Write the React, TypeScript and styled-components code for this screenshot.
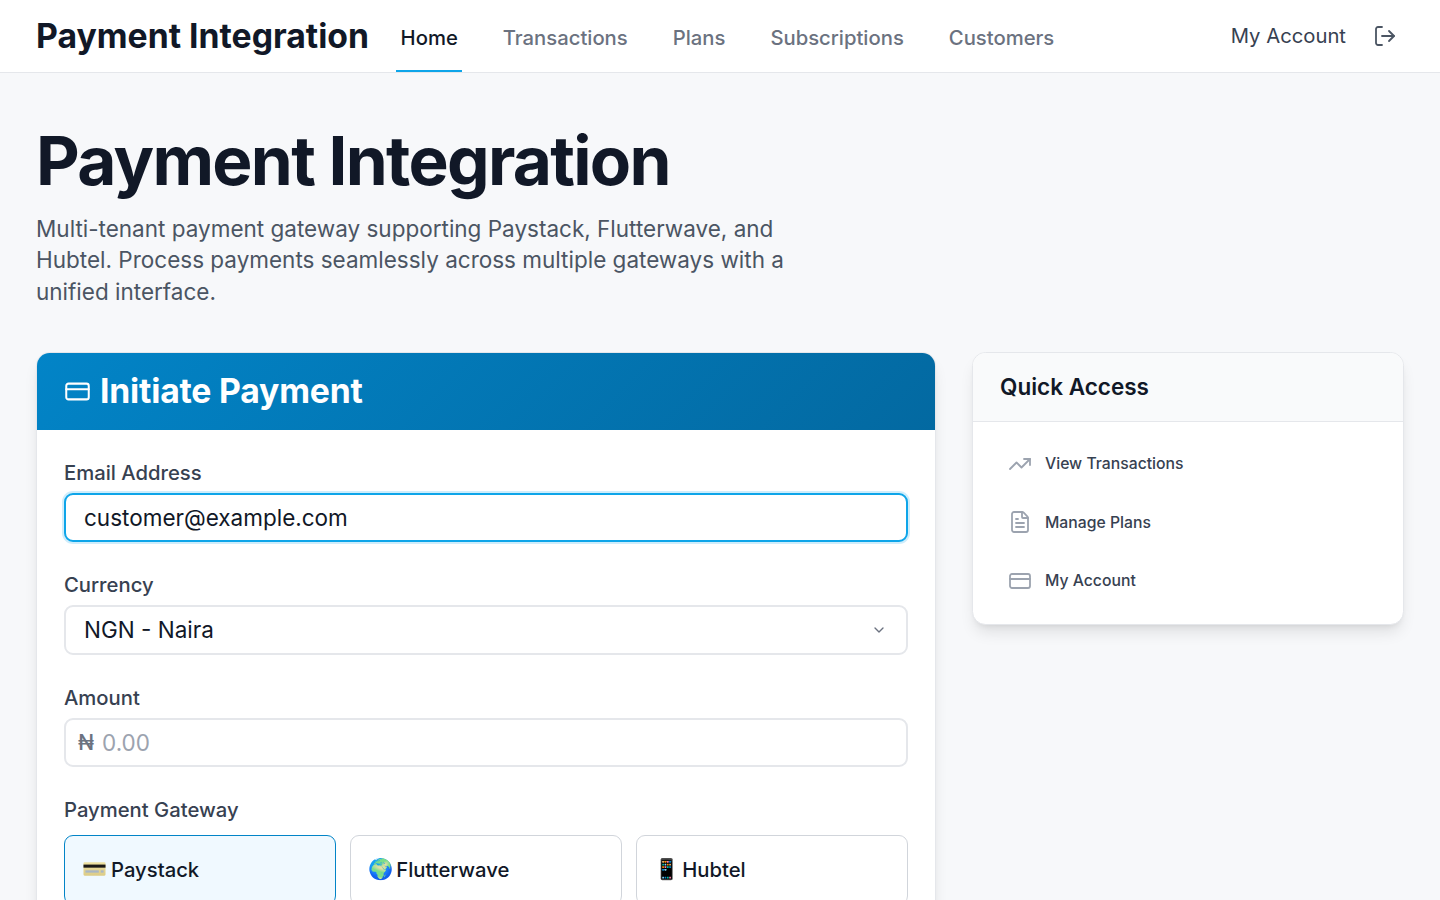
import React from "react";
import styled, { createGlobalStyle } from "styled-components";
import { LogOut, CreditCard, TrendingUp, FileText, ChevronDown } from "lucide-react";

const Global = createGlobalStyle`
  html, body { margin: 0; padding: 0; height: 900px; overflow: hidden; background: #f7f8fa; }
  body { font-family: Inter, "Noto Sans", sans-serif; color: #111827; }
  * { box-sizing: border-box; }
`;
const Header = styled.header`
  height: 73px; background: #fff; border-bottom: 1px solid #e5e7eb;
  display: flex; align-items: stretch; padding: 0 36px;
`;
const Brand = styled.div`
  font-size: 33.75px; font-weight: 700; color: #111827;
  line-height: 72px; margin-right: 27px;
`;
const Nav = styled.nav`display: flex; gap: 36px; flex: 1;`;
const NavLink = styled.a<{ $active?: boolean }>`
  display: flex; align-items: center; padding: 4px 4.5px 0; font-size: 20.25px; font-weight: 500;
  color: ${p => (p.$active ? "#111827" : "#6b7280")};
  border-bottom: 2px solid ${p => (p.$active ? "#0ea5e9" : "transparent")};
`;
const Account = styled.div`
  display: flex; align-items: center; gap: 27px; font-size: 20.25px; color: #374151; padding-right: 7px;
`;
const AccountLabel = styled.span`margin-bottom: 2px;`;
const Main = styled.main`padding: 54px 36px 0;`;
const Title = styled.h1`
  margin: 0; font-size: 67.5px; line-height: 67.5px; font-weight: 700; letter-spacing: -1.7px; color: #111827;
`;
const Lead = styled.p`
  margin: 18px 0 0; width: 800px; font-size: 22.5px; line-height: 31.5px; color: #4b5563;
`;
const Columns = styled.div`
  display: grid; grid-template-columns: 900px 432px; gap: 36px; margin-top: 45px; align-items: start;
`;
const PayCard = styled.section`
  background: #fff; border: 1px solid #e5e7eb; border-radius: 13.5px; overflow: hidden;
  box-shadow: 0 10px 15px -3px rgba(0,0,0,.1), 0 4px 6px -4px rgba(0,0,0,.1); height: 700px;
`;
const PayHead = styled.div`
  height: 77px; display: flex; align-items: center; gap: 9px; padding: 0 27px;
  background: linear-gradient(135deg, #0284c7, #0369a1); color: #fff;
  font-size: 33.75px; font-weight: 700; letter-spacing: -0.2px;
`;
const PayTitle = styled.span`margin-bottom: 2px;`;
const PayBody = styled.div`padding: 26.5px 27px 0; display: flex; flex-direction: column; gap: 27px;`;
const Field = styled.div`display: flex; flex-direction: column; gap: 4.5px;`;
const Label = styled.label`font-size: 20.25px; font-weight: 500; color: #374151; line-height: 32px;`;
const Box = styled.div<{ $focus?: boolean }>`
  height: 49px; border-radius: 9px; display: flex; align-items: center; padding: 0 19px 0 18px;
  background: #fff; font-size: 22.5px; color: #111827;
  border: 2px solid ${p => (p.$focus ? "#0ea5e9" : "#e5e7eb")};
  ${p => p.$focus && "box-shadow: 0 0 0 2px rgba(14,165,233,.2);"}
  justify-content: space-between;
`;
const SelectBox = styled(Box)`height: 50px; margin-top: -1px;`;
const AmountBox = styled(Box)`justify-content: flex-start; padding-left: 12px; gap: 8px; color: #9ca3af;`;
const Naira = styled.span`color: #6b7280; font-weight: 500; font-size: 21px;`;
const Gateways = styled.div`display: grid; grid-template-columns: repeat(3, 1fr); gap: 14px; margin-top: 4.5px;`;
const Gateway = styled.div<{ $active?: boolean }>`
  height: 70px; border-radius: 9px; padding: 0 17px 2px; display: flex; align-items: center;
  font-size: 20.25px; font-weight: 500; color: #111827; gap: 5px;
  border: 1px solid ${p => (p.$active ? "#0284c7" : "#d1d5db")};
  background: ${p => (p.$active ? "#f0f9ff" : "#fff")};
`;
const Emoji = styled.span`font-family: "Noto Color Emoji", sans-serif; font-size: 20.25px; margin-right: -2px;`;
const CardEmoji = styled.svg`width: 23px; height: 16px; flex: none; margin-left: 1px;`;
const Side = styled.aside`
  background: #fff; border: 1px solid #e5e7eb; border-radius: 13.5px; overflow: hidden;
  box-shadow: 0 10px 15px -3px rgba(0,0,0,.1), 0 4px 6px -4px rgba(0,0,0,.1);
`;
const SideHead = styled.div`
  height: 69px; background: #f9fafb; border-bottom: 1px solid #e5e7eb; padding: 0 27px 2px;
  display: flex; align-items: center; font-size: 22.5px; font-weight: 600; color: #111827;
`;
const SideList = styled.div`padding: 12.5px 27px 14px; display: flex; flex-direction: column;`;
const SideItem = styled.a`
  height: 58.5px; display: flex; align-items: center; gap: 13px; padding-left: 8px;
  font-size: 15.75px; font-weight: 500; color: #374151;
  svg { color: #9ca3af; }
`;

export default function App() {
  return (
    <>
      <Global />
      <Header>
        <Brand>Payment Integration</Brand>
        <Nav>
          <NavLink $active>Home</NavLink>
          <NavLink>Transactions</NavLink>
          <NavLink>Plans</NavLink>
          <NavLink>Subscriptions</NavLink>
          <NavLink>Customers</NavLink>
        </Nav>
        <Account><AccountLabel>My Account</AccountLabel><LogOut size={24} strokeWidth={1.8} color="#4b5563" /></Account>
      </Header>
      <Main>
        <Title>Payment Integration</Title>
        <Lead>Multi-tenant payment gateway supporting Paystack, Flutterwave, and Hubtel. Process payments seamlessly across multiple gateways with a unified interface.</Lead>
        <Columns>
          <PayCard>
            <PayHead><CreditCard size={27} strokeWidth={1.8} /><PayTitle>Initiate Payment</PayTitle></PayHead>
            <PayBody>
              <Field><Label>Email Address</Label><Box $focus>customer@example.com</Box></Field>
              <Field><Label>Currency</Label><SelectBox>NGN - Naira<ChevronDown size={16} color="#6b7280" /></SelectBox></Field>
              <Field><Label>Amount</Label><AmountBox><Naira>₦</Naira>0.00</AmountBox></Field>
              <Field>
                <Label>Payment Gateway</Label>
                <Gateways>
                  <Gateway $active>
                    <CardEmoji viewBox="0 0 24 16">
                      <defs>
                        <linearGradient id="cardGold" x1="0" y1="0" x2="0" y2="1">
                          <stop offset="0" stopColor="#efe2a2" />
                          <stop offset="1" stopColor="#dccb86" />
                        </linearGradient>
                      </defs>
                      <rect x="0.5" y="1" width="23" height="14" rx="1.2" fill="url(#cardGold)" />
                      <rect x="0.5" y="3.4" width="23" height="3.2" fill="#1c1a17" />
                      <rect x="2.5" y="9.4" width="14" height="2.4" fill="#a9b6c4" />
                      <rect x="18.5" y="9.4" width="3" height="2.4" fill="#a9b6c4" />
                    </CardEmoji>
                    Paystack
                  </Gateway>
                  <Gateway><Emoji>🌍</Emoji>Flutterwave</Gateway>
                  <Gateway><Emoji>📱</Emoji>Hubtel</Gateway>
                </Gateways>
              </Field>
            </PayBody>
          </PayCard>
          <Side>
            <SideHead>Quick Access</SideHead>
            <SideList>
              <SideItem><TrendingUp size={24} strokeWidth={1.8} />View Transactions</SideItem>
              <SideItem><FileText size={24} strokeWidth={1.8} />Manage Plans</SideItem>
              <SideItem><CreditCard size={24} strokeWidth={1.8} />My Account</SideItem>
            </SideList>
          </Side>
        </Columns>
      </Main>
    </>
  );
}
